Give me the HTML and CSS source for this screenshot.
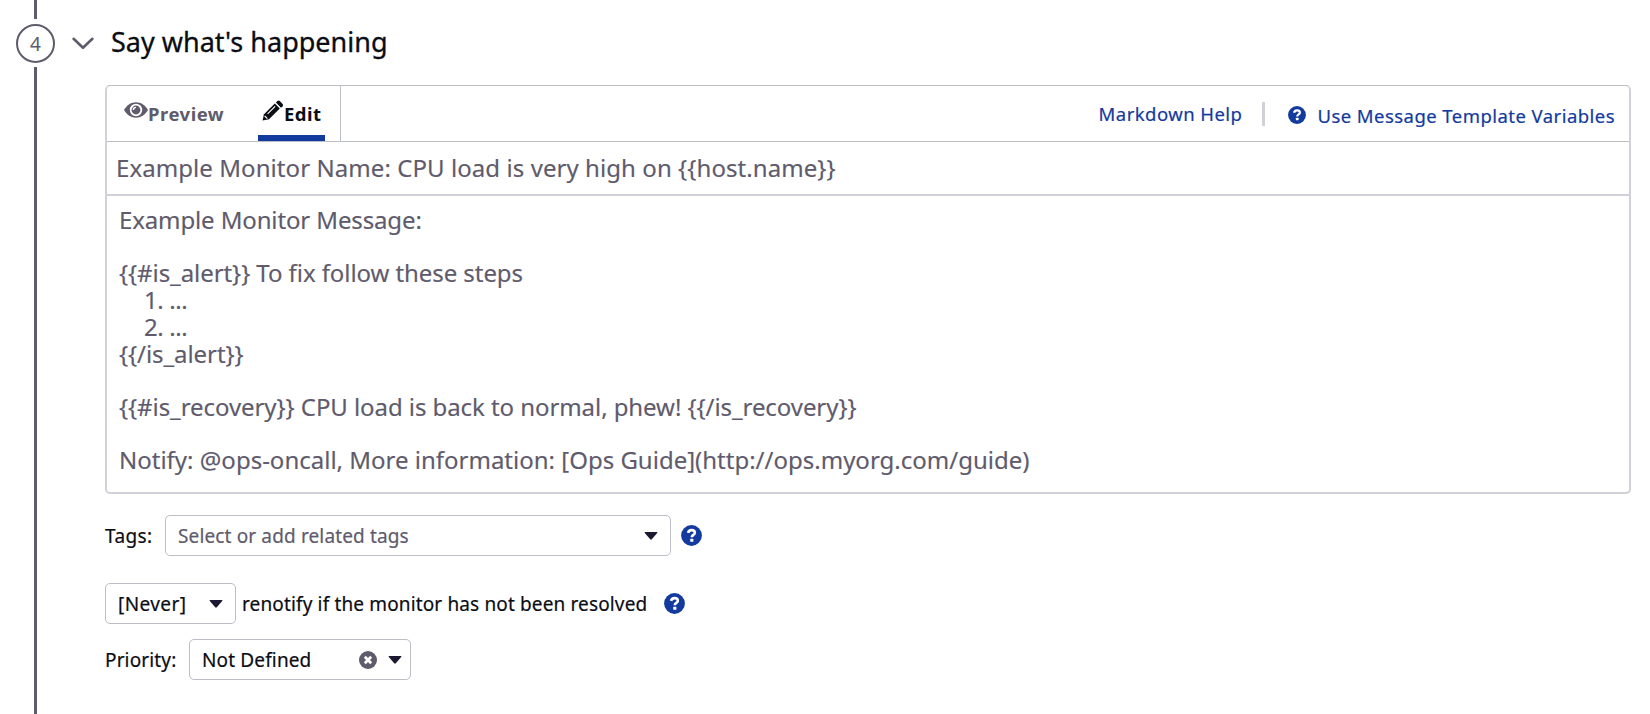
FILE: index.html
```html
<!DOCTYPE html>
<html lang="en">
<head>
<meta charset="utf-8">
<title>Say what's happening</title>
<link rel="stylesheet" href="styles.css">
</head>
<body>
<svg class="defs" width="0" height="0" aria-hidden="true">
  <symbol id="help" viewBox="0 0 22 22">
    <circle cx="11" cy="11" r="10.900" fill="currentColor"/>
    <path d="M7.400 8.300C7.900 6.200 9.200 5.400 11 5.400c2.100 0 3.500 1.100 3.500 2.700 0 2.300-3.200 2.200-3.200 4.700" fill="none" stroke="#fff" stroke-width="2.700"/>
    <rect x="9.700" y="14.500" width="3.300" height="3" rx=".6" fill="#fff"/>
  </symbol>
  <symbol id="caret" viewBox="0 0 14 8">
    <path d="M1.200 0h11.600q1 0 .4.900L7.800 7.300q-.8.800-1.600 0L.8.900Q.2 0 1.200 0z" fill="currentColor"/>
  </symbol>
</svg>
<main class="step">
  <div class="rail">
    <span class="line line-top"></span>
    <span class="num">4</span>
    <span class="line line-rest"></span>
  </div>
  <section class="content">
    <header class="head">
      <svg class="chevron" viewBox="0 0 22 13"><path d="M1.600 1.800 11 10.800l9.400-9" fill="none" stroke="currentColor" stroke-width="2.600" stroke-linecap="round" stroke-linejoin="round"/></svg>
      <h1 class="title">Say what's happening</h1>
    </header>
    <div class="body">
      <div class="editor">
        <div class="toolbar">
          <div class="tabs">
            <div class="tab preview">
              <svg class="eye" viewBox="0 0 24 16"><path d="M0 8C3 3 7.200.3 12 .3S21 3 24 8c-3 5-7.200 7.700-12 7.700S3 13 0 8z" fill="currentColor"/><circle cx="12" cy="8" r="6.200" fill="#fff"/><circle cx="12" cy="8" r="4.400" fill="currentColor"/><path d="M9.400 8A2.600 2.600 0 0 1 12 5.400" fill="none" stroke="#fff" stroke-width="1.400"/></svg>
              <span>Preview</span>
            </div>
            <div class="tab edit">
              <svg class="pencil" viewBox="0 0 22 21"><path d="M.5 20.500 2 14.300 12.800 3.500l5 5L7 19.200z" fill="currentColor"/><path d="m13.900 2.500 1.500-1.500q1.200-1 2.400.1l2.800 2.800q1 1.200 0 2.400l-1.600 1.400z" fill="currentColor"/><path d="m5.600 13.800 7.500-7.500M2.700 16l2.700 2.700" stroke="#fff" stroke-width="1.100"/></svg>
              <span>Edit</span>
            </div>
          </div>
          <div class="links">
            <a class="link">Markdown Help</a>
            <i class="sep"></i>
            <svg class="help-sm"><use href="#help"/></svg>
            <a class="link vars">Use Message Template Variables</a>
          </div>
        </div>
        <div class="name">Example Monitor Name: CPU load is very high on {{host.name}}</div>
        <div class="message">
          <div class="text intro">Example Monitor Message:</div>
          <div class="text gap snug">{{#is_alert}} To fix follow these steps</div>
          <div class="text item">1. ...</div>
          <div class="text item">2. ...</div>
          <div class="text snug">{{/is_alert}}</div>
          <div class="text gap snug">{{#is_recovery}} CPU load is back to normal, phew! {{/is_recovery}}</div>
          <div class="text gap">Notify: @ops-oncall, More information: [Ops Guide](http://ops.myorg.com/guide)</div>
        </div>
      </div>
      <div class="row tags">
        <span class="label">Tags:</span>
        <div class="select select-tags"><span>Select or add related tags</span><svg class="caret"><use href="#caret"/></svg></div>
        <svg class="help"><use href="#help"/></svg>
      </div>
      <div class="row renotify">
        <div class="select select-never"><span>[Never]</span><svg class="caret"><use href="#caret"/></svg></div>
        <span class="label">renotify if the monitor has not been resolved</span>
        <svg class="help"><use href="#help"/></svg>
      </div>
      <div class="row priority">
        <span class="label">Priority:</span>
        <div class="select select-priority"><span>Not Defined</span><svg class="clear" viewBox="0 0 18 18"><circle cx="9" cy="9" r="9" fill="currentColor"/><path d="m5.800 5.800 6.400 6.400m0-6.400-6.400 6.400" stroke="#fff" stroke-width="2.800"/></svg><svg class="caret"><use href="#caret"/></svg></div>
      </div>
    </div>
  </section>
</main>
</body>
</html>
```
FILE: styles.css
```css
* { box-sizing: border-box; }
body { margin: 0; background: #fff; color: #0b0d14; font-family: "Noto Sans", sans-serif; font-size: 19px; }
.defs { position: absolute; }
svg { display: block; flex: none; }
.step { display: flex; width: 1650px; height: 714px; overflow: hidden; }
.rail { width: 71px; display: flex; flex-direction: column; align-items: center; color: #605b6c; }
.line { width: 3px; background: #605b6c; }
.line-top { height: 19px; }
.line-rest { flex: 1; }
.num { width: 39px; height: 39px; margin: 5px 0 4px; border: 2.500px solid #605b6c; border-radius: 50%; display: flex; align-items: center; justify-content: center; font-size: 19px; }
.content { flex: 1; }
.head { display: flex; align-items: flex-start; height: 85px; padding-left: 1px; }
.chevron { width: 22px; height: 13px; margin-top: 37px; color: #605b6c; }
.title { margin: 23px 0 0 17px; font-size: 27px; font-weight: 400; line-height: 38px; -webkit-text-stroke: .3px; }
.body { padding-left: 34px; }
.editor { width: 1526px; border: 2px solid #d1d1d9; border-top: 1px solid #bcbec5; border-radius: 5px; color: #605b6c; }
.toolbar { height: 56px; display: flex; justify-content: space-between; border-bottom: 1px solid #bcbec5; }
.tabs { display: flex; width: 234px; border-right: 1px solid #bcbec5; padding-left: 18px; font-weight: 700; font-size: 18.500px; gap: 33px; }
.tab { display: flex; }
.eye { width: 24px; height: 16px; margin: 16px 0 0 -1px; }
.tab span { margin-top: 15px; line-height: 26px; letter-spacing: .5px; white-space: nowrap; }
.preview { width: 100px; }
.edit { width: 67px; color: #0b0d14; border-bottom: 6px solid #133a9e; padding: 0 4px; }
.pencil { width: 22px; height: 21px; margin-top: 14px; }
.links { display: flex; align-items: center; color: #133a9e; padding-right: 14px; font-size: 18.500px; letter-spacing: .45px; -webkit-text-stroke: .2px; }
.vars { padding-top: 3px; }
.sep { width: 3px; height: 24px; background: #d1d1d9; margin: 0 23px 0 20px; }
.help-sm { width: 18px; height: 18px; margin: 3px 11px 0 0; }
.name { height: 54px; border-bottom: 2px solid #d1d1d9; padding: 9px; font-size: 24px; line-height: 33px; letter-spacing: .07px; -webkit-text-stroke: .15px; }
.message { height: 296px; padding: 11px 12px; font-size: 24px; line-height: 26.700px; -webkit-text-stroke: .15px; }
.gap { margin-top: 26.700px; }
.intro { letter-spacing: -.13px; }
.snug { letter-spacing: -.07px; }
.item { padding-left: 25px; letter-spacing: -.4px; }
.row { display: flex; align-items: center; letter-spacing: .14px; -webkit-text-stroke: .2px; }
.tags { margin-top: 21px; }
.tags .label { width: 60px; letter-spacing: .4px; }
.renotify { margin-top: 27px; }
.priority { margin-top: 15px; }
.priority .label { width: 84px; }
.select { height: 41px; border: 1px solid #bcbec5; border-radius: 5px; display: flex; align-items: center; padding: 0 12px; }
.select span { flex: 1; }
.select-tags { width: 506px; margin-right: 10px; color: #605b6c; }
.select-never { width: 131px; margin-right: 6px; }
.select-never span { letter-spacing: .4px; }
.select-priority { width: 222px; padding-right: 8px; }
.caret { width: 14px; height: 8px; color: #1c1830; }
.clear { width: 18px; height: 18px; margin-right: 11px; color: #605b6c; }
.help { width: 21px; height: 21px; color: #133a9e; }
.renotify .help { margin-left: 17px; }
```
